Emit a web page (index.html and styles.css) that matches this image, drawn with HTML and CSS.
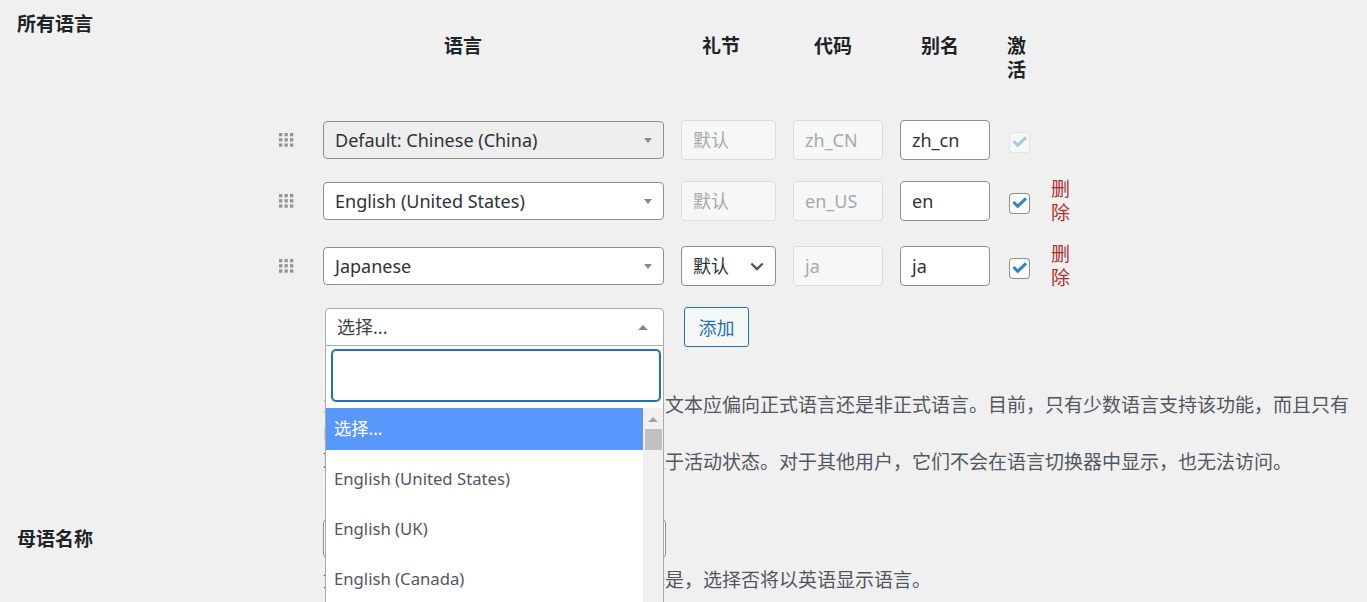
FILE: index.html
```html
<!DOCTYPE html>
<html lang="zh-CN">
<head>
    <meta charset="UTF-8">
    <meta name="viewport" content="width=device-width, initial-scale=1.0">
    <title>语言设置</title>
    <link rel="stylesheet" href="styles.css">
</head>
<body>
    <div class="settings">
        <!-- 所有语言 -->
        <div class="form-row">
            <div class="row-label">所有语言</div>
            <div class="row-field">
                <div class="lang-table">
                    <div class="th th-lang">语言</div>
                    <div class="th">礼节</div>
                    <div class="th">代码</div>
                    <div class="th">别名</div>
                    <div class="th th-active">激活</div>
                    <div class="th th-empty"></div>

                    <div class="handle">
                        <svg width="15" height="14" viewBox="0 0 15 14"><g fill="#939393"><rect x="0" y="0" width="3.3" height="3.3"/><rect x="5.5" y="0" width="3.3" height="3.3"/><rect x="11" y="0" width="3.3" height="3.3"/><rect x="0" y="5.2" width="3.3" height="3.3"/><rect x="5.5" y="5.2" width="3.3" height="3.3"/><rect x="11" y="5.2" width="3.3" height="3.3"/><rect x="0" y="10.4" width="3.3" height="3.3"/><rect x="5.5" y="10.4" width="3.3" height="3.3"/><rect x="11" y="10.4" width="3.3" height="3.3"/></g></svg>
                    </div>
                    <div class="select is-disabled"><span>Default: Chinese (China)</span><span class="caret-down"></span></div>
                    <div class="field is-disabled">默认</div>
                    <div class="field is-disabled">zh_CN</div>
                    <div class="field">zh_cn</div>
                    <div class="check is-disabled">
                        <svg width="21" height="21" viewBox="0 0 21 21"><polyline points="4.5,9 8.7,13.3 17,5.3" fill="none" stroke="#a9c8e6" stroke-width="3"/></svg>
                    </div>
                    <div></div>

                    <div class="handle">
                        <svg width="15" height="14" viewBox="0 0 15 14"><g fill="#939393"><rect x="0" y="0" width="3.3" height="3.3"/><rect x="5.5" y="0" width="3.3" height="3.3"/><rect x="11" y="0" width="3.3" height="3.3"/><rect x="0" y="5.2" width="3.3" height="3.3"/><rect x="5.5" y="5.2" width="3.3" height="3.3"/><rect x="11" y="5.2" width="3.3" height="3.3"/><rect x="0" y="10.4" width="3.3" height="3.3"/><rect x="5.5" y="10.4" width="3.3" height="3.3"/><rect x="11" y="10.4" width="3.3" height="3.3"/></g></svg>
                    </div>
                    <div class="select"><span>English (United States)</span><span class="caret-down"></span></div>
                    <div class="field is-disabled">默认</div>
                    <div class="field is-disabled">en_US</div>
                    <div class="field">en</div>
                    <div class="check">
                        <svg width="21" height="21" viewBox="0 0 21 21"><polyline points="4.5,9 8.7,13.3 17,5.3" fill="none" stroke="#3582c4" stroke-width="3"/></svg>
                    </div>
                    <a class="delete">删除</a>

                    <div class="handle">
                        <svg width="15" height="14" viewBox="0 0 15 14"><g fill="#939393"><rect x="0" y="0" width="3.3" height="3.3"/><rect x="5.5" y="0" width="3.3" height="3.3"/><rect x="11" y="0" width="3.3" height="3.3"/><rect x="0" y="5.2" width="3.3" height="3.3"/><rect x="5.5" y="5.2" width="3.3" height="3.3"/><rect x="11" y="5.2" width="3.3" height="3.3"/><rect x="0" y="10.4" width="3.3" height="3.3"/><rect x="5.5" y="10.4" width="3.3" height="3.3"/><rect x="11" y="10.4" width="3.3" height="3.3"/></g></svg>
                    </div>
                    <div class="select"><span>Japanese</span><span class="caret-down"></span></div>
                    <div class="field field-select"><span>默认</span>
                        <svg width="14" height="9" viewBox="0 0 14 9"><polyline points="1.3,1.5 7,7 12.7,1.5" fill="none" stroke="#50575e" stroke-width="2.4"/></svg>
                    </div>
                    <div class="field is-disabled">ja</div>
                    <div class="field">ja</div>
                    <div class="check">
                        <svg width="21" height="21" viewBox="0 0 21 21"><polyline points="4.5,9 8.7,13.3 17,5.3" fill="none" stroke="#3582c4" stroke-width="3"/></svg>
                    </div>
                    <a class="delete">删除</a>

                    <div></div>
                    <div class="picker">
                        <div class="select is-open"><span>选择...</span><span class="caret-up"></span></div>
                        <div class="dropdown">
                            <div class="dd-search"><div class="dd-input"></div></div>
                            <div class="dd-results">
                                <ul class="dd-list">
                                    <li class="dd-option is-active">选择...</li>
                                    <li class="dd-option">English (United States)</li>
                                    <li class="dd-option">English (UK)</li>
                                    <li class="dd-option">English (Canada)</li>
                                </ul>
                                <div class="dd-scroll">
                                    <span class="scroll-up"></span>
                                    <span class="scroll-thumb"></span>
                                </div>
                            </div>
                        </div>
                    </div>
                    <div class="add-cell"><button class="button">添加</button></div>
                </div>

                <p class="desc first">为每种语言选择正式程度，决定机器翻译文本应偏向正式语言还是非正式语言。目前，只有少数语言支持该功能，而且只有DeepL 支持。</p>
                <p class="desc">取消勾选激活的语言将仅对管理员用户处于活动状态。对于其他用户，它们不会在语言切换器中显示，也无法访问。</p>
            </div>
        </div>

        <!-- 母语名称 -->
        <div class="form-row row-native">
            <div class="row-label">母语名称</div>
            <div class="row-field">
                <div class="text-input"></div>
                <p class="desc">如果语言名称应以其母语显示，则请选择是，选择否将以英语显示语言。</p>
            </div>
        </div>
    </div>
</body>
</html>
```

FILE: styles.css
```css
html, body {
    margin: 0;
    overflow: hidden;
}
body {
    background-color: #f0f0f1;
    color: #3c434a;
    font-family: "Noto Sans", "Noto Sans CJK SC", sans-serif;
    font-size: 19px;
    line-height: 24px;
}
.form-row {
    display: grid;
    grid-template-columns: 323px 1fr;
    padding: 12px 0 20px;
}
.row-label {
    padding-left: 17px;
    font-weight: 700;
    color: #1d2327;
}
.row-field {
    min-width: 0;
    padding-right: 9px;
}
.lang-table {
    display: grid;
    grid-template-columns: 44px 341px 95px 90px 90px 24px 23px;
    column-gap: 17px;
    row-gap: 17px;
    align-items: center;
    margin: 22px 0 0 -61px;
}
.th {
    align-self: start;
    font-weight: 700;
    color: #1d2327;
    padding: 0 0 21px 21px;
}
.th-lang {
    grid-column: span 2;
    text-align: center;
    padding-left: 0;
}
.th-active, .th-empty {
    padding-left: 0;
}
.handle {
    display: flex;
    justify-content: flex-end;
    padding-right: 12px;
}
.handle svg {
    display: block;
}
.select {
    height: 38px;
    box-sizing: border-box;
    border: 1px solid #8c8f94;
    border-radius: 4px;
    background: #fff;
    display: flex;
    align-items: center;
    justify-content: space-between;
    padding: 0 11px;
    font-size: 18px;
    color: #2c3338;
}
.select.is-disabled {
    background: #eee;
}
.select.is-open {
    border-color: #aaa;
    border-radius: 4px 4px 0 0;
    color: #3c434a;
}
.caret-down {
    border-left: 4.5px solid transparent;
    border-right: 4.5px solid transparent;
    border-top: 5px solid #888;
}
.caret-up {
    border-left: 5px solid transparent;
    border-right: 5px solid transparent;
    border-bottom: 5px solid #888;
    margin-right: 4px;
}
.field {
    height: 40px;
    box-sizing: border-box;
    border: 1px solid #8c8f94;
    border-radius: 4px;
    background: #fff;
    padding: 0 11px;
    font-size: 18px;
    line-height: 38px;
    color: #2c3338;
}
.field.is-disabled {
    background: #f6f7f7;
    border-color: #dcdcde;
    color: #a7aaad;
}
.field-select {
    display: flex;
    align-items: center;
    justify-content: space-between;
}
.field-select svg {
    display: block;
}
.check {
    width: 21px;
    height: 21px;
    border-radius: 4px;
    background: #fff;
    box-shadow: inset 0 0 0 1px #8c8f94;
    margin: 4px 0 0 2px;
}
.check svg {
    display: block;
}
.check.is-disabled {
    background: #f6f7f7;
    box-shadow: inset 0 0 0 1px #e2e3e5;
}
.delete {
    color: #b32d2e;
    padding-left: 3px;
    cursor: pointer;
}
.picker {
    position: relative;
    margin-left: 2px;
}
.dropdown {
    position: absolute;
    top: 100%;
    left: 0;
    right: 0;
    height: 256px;
    overflow: hidden;
    box-sizing: border-box;
    border: 1px solid #aaa;
    border-top: none;
    border-bottom: none;
    background: #fff;
    z-index: 10;
}
.dd-search {
    padding: 4px 3px 7px 6px;
}
.dd-input {
    height: 51px;
    box-sizing: border-box;
    border: 1px solid #2271b1;
    box-shadow: 0 0 0 1px #2271b1;
    border-radius: 4px;
    background: #fff;
}
.dd-results {
    display: flex;
    height: 200px;
}
.dd-list {
    flex: 1;
    list-style: none;
    margin: 0;
    padding: 0;
}
.dd-option {
    height: 42px;
    line-height: 42px;
    margin-bottom: 8px;
    padding-left: 8px;
    font-size: 16.7px;
    color: #50575e;
}
.dd-option.is-active {
    background: #5897fb;
    color: #fff;
    font-size: 17.3px;
}
.dd-scroll {
    width: 20px;
    background: #f0f0f0;
    display: flex;
    flex-direction: column;
    align-items: center;
}
.scroll-up {
    margin-top: 9px;
    border-left: 5px solid transparent;
    border-right: 5px solid transparent;
    border-bottom: 5px solid #a3a3a3;
}
.scroll-thumb {
    width: 17px;
    height: 21px;
    margin-top: 7px;
    background: #c1c1c1;
}
.add-cell {
    grid-column: span 5;
}
.button {
    width: 65px;
    height: 40px;
    margin-left: 3px;
    padding: 0;
    border: 1px solid #2271b1;
    border-radius: 3px;
    background: #f6f7f7;
    color: #2271b1;
    font-family: inherit;
    font-size: 18px;
    cursor: pointer;
}
.desc {
    margin: 0;
    line-height: 28.5px;
    color: #50575e;
}
.desc.first {
    margin-top: 44px;
}
.row-native .row-label {
    padding-top: 18px;
}
.row-native .row-field {
    padding-top: 10px;
}
.text-input {
    width: 343px;
    height: 39px;
    box-sizing: border-box;
    border: 1px solid #8c8f94;
    border-radius: 4px;
    background: #fff;
}
.row-native .desc {
    margin-top: 8px;
}
```
